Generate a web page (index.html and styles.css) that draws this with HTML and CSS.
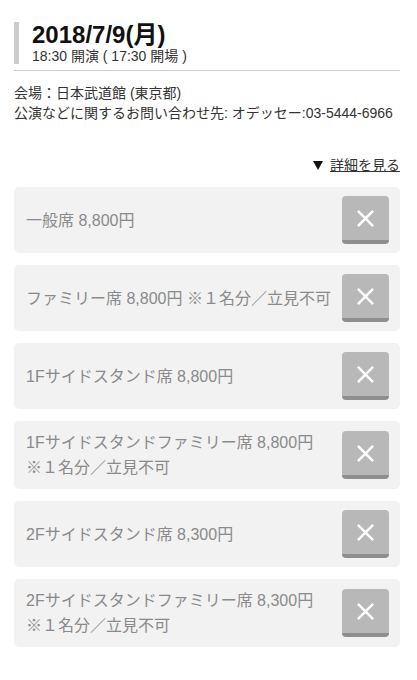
FILE: index.html
```html
<!DOCTYPE html>
<html lang="ja">
<head>
    <meta charset="utf-8">
    <title>公演詳細</title>
    <link rel="stylesheet" href="styles.css">
</head>
<body>
    <div class="page">
        <div class="head">
            <div class="date-box">
                <div class="date">2018/7/9(月)</div>
                <div class="time">18:30 開演 ( 17:30 開場 )</div>
            </div>
        </div>

        <div class="info">
            <div>会場：日本武道館 (東京都)</div>
            <div>公演などに関するお問い合わせ先: オデッセー:03-5444-6966</div>
        </div>

        <div class="more"><span class="arrow"></span><a href="#">詳細を見る</a></div>

        <ul class="seats">
            <li class="seat">
                <span class="seat-name">一般席 8,800円</span>
                <button class="del"><svg viewBox="0 0 20 20"><path d="M2 2 L18 18 M18 2 L2 18"/></svg></button>
            </li>
            <li class="seat">
                <span class="seat-name">ファミリー席 8,800円 ※１名分／立見不可</span>
                <button class="del"><svg viewBox="0 0 20 20"><path d="M2 2 L18 18 M18 2 L2 18"/></svg></button>
            </li>
            <li class="seat">
                <span class="seat-name">1Fサイドスタンド席 8,800円</span>
                <button class="del"><svg viewBox="0 0 20 20"><path d="M2 2 L18 18 M18 2 L2 18"/></svg></button>
            </li>
            <li class="seat">
                <span class="seat-name">1Fサイドスタンドファミリー席 8,800円<br>※１名分／立見不可</span>
                <button class="del"><svg viewBox="0 0 20 20"><path d="M2 2 L18 18 M18 2 L2 18"/></svg></button>
            </li>
            <li class="seat">
                <span class="seat-name">2Fサイドスタンド席 8,300円</span>
                <button class="del"><svg viewBox="0 0 20 20"><path d="M2 2 L18 18 M18 2 L2 18"/></svg></button>
            </li>
            <li class="seat">
                <span class="seat-name">2Fサイドスタンドファミリー席 8,300円<br>※１名分／立見不可</span>
                <button class="del"><svg viewBox="0 0 20 20"><path d="M2 2 L18 18 M18 2 L2 18"/></svg></button>
            </li>
        </ul>
    </div>
</body>
</html>
```

FILE: styles.css
```css
body {
    margin: 0;
    background: #fff;
    font-family: "Liberation Sans", "Noto Sans CJK JP", sans-serif;
    color: #222;
}
.page {
    padding: 22px 17px 20px 14px;
}
.head {
    border-bottom: 1px solid #ccc;
    padding-bottom: 6px;
}
.date-box {
    border-left: 5px solid #ccc;
    padding-left: 13px;
}
.date {
    font-size: 24px;
    font-weight: bold;
    line-height: 26px;
    color: #111;
}
.time {
    font-size: 14px;
    line-height: 16px;
    color: #333;
}
.info {
    margin-top: 12px;
    font-size: 14px;
    line-height: 20px;
    color: #333;
}
.more {
    margin-top: 32px;
    display: flex;
    justify-content: flex-end;
    align-items: center;
    gap: 7px;
    font-size: 14px;
    line-height: 20px;
}
.more .arrow {
    width: 0;
    height: 0;
    border-left: 5px solid transparent;
    border-right: 5px solid transparent;
    border-top: 9px solid #111;
}
.more a {
    color: #333;
    text-decoration: underline;
}
.seats {
    list-style: none;
    margin: 12px 0 0;
    padding: 0;
}
.seat {
    display: flex;
    align-items: center;
    justify-content: space-between;
    background: #f2f2f2;
    border-radius: 5px;
    min-height: 66px;
    padding: 9px 11px 9px 12px;
    box-sizing: border-box;
    margin-bottom: 12px;
}
.seat-name {
    font-size: 16px;
    line-height: 25px;
    color: #8a8a8a;
}
.del {
    flex: none;
    width: 47px;
    height: 48px;
    border: none;
    border-bottom: 4px solid #8e8e8e;
    border-radius: 4px;
    background: #b8b8b8;
    padding: 0;
    display: flex;
    align-items: center;
    justify-content: center;
}
.del svg {
    width: 19px;
    height: 19px;
    stroke: #fff;
    stroke-width: 2.6;
    fill: none;
}
```
